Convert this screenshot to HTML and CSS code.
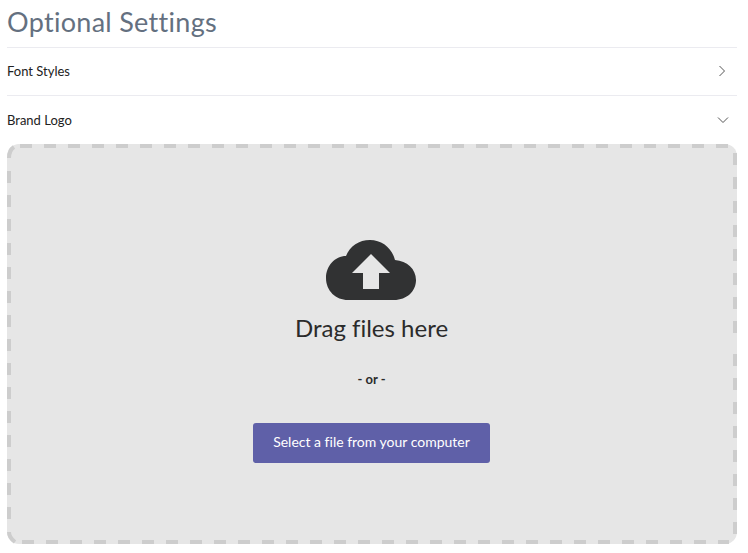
FILE: index.html
```html
<!DOCTYPE html>
<html lang="en">
<head>
<meta charset="utf-8">
<title>Optional Settings</title>
<link rel="stylesheet" href="styles.css">
</head>
<body>
<main class="page">
  <h1 class="title">Optional Settings</h1>
  <div class="row">
    <span>Font Styles</span>
    <svg class="chev" width="12" height="12" viewBox="0 0 12 12"><path d="M2.5 1l5 5-5 5" fill="none" stroke="#555" stroke-width="1"/></svg>
  </div>
  <div class="row row-open">
    <span>Brand Logo</span>
    <svg class="chev" width="12" height="12" viewBox="0 0 12 12"><path d="M1 3.5l5 5 5-5" fill="none" stroke="#555" stroke-width="1"/></svg>
  </div>
  <section class="drop">
    <svg class="dash" width="730" height="400" viewBox="0 0 730 400">
      <g fill="none" stroke="#cdcdcd" stroke-width="4">
        <path d="M13 2H721" stroke-dasharray="12 12"/>
        <path d="M15 398H722" stroke-dasharray="12 12"/>
        <path d="M2 27V375" stroke-dasharray="12 12"/>
        <path d="M728 9V189" stroke-dasharray="12 12"/>
        <path d="M728 210V390" stroke-dasharray="12 12"/>
        <path d="M2 14C2 9 4 5 7 3"/>
        <path d="M2 388C2 392 4 395 8 398"/>
      </g>
    </svg>
    <svg class="cloud" width="90" height="60" viewBox="0 0 90 60">
      <path fill="#313233" d="M22 60C10 60 0 51 0 38 0 26 9 16 20 16 24 6 33 0 44 0 56 0 66 8 69 20 81 21 90 29 90 40 90 51 81 60 68 60Z"/>
      <path fill="#e6e6e6" d="M45 14L64 33H53V49H37V33H26Z"/>
    </svg>
    <p class="drag">Drag files here</p>
    <p class="or">- or -</p>
    <button class="btn" type="button">Select a file from your computer</button>
  </section>
</main>
</body>
</html>
```
FILE: styles.css
```css
* { box-sizing: border-box; }
html, body { margin: 0; background: #fff; }
body { font-family: Lato, "Open Sans", sans-serif; color: #222; font-variant-ligatures: none; }
.page { width: 748px; height: 553px; padding: 0 11px 0 7px; overflow: hidden; }
.title { margin: 0; height: 47px; font-size: 27px; line-height: 43px; letter-spacing: .3px; font-weight: 400; color: #647080; }
.row { height: 48px; border-top: 1px solid #ebebf0; display: flex; align-items: center; justify-content: space-between; padding: 0 8px 1px 0; font-size: 13px; }
.row-open { height: 49px; padding-bottom: 0; }
.chev { display: block; }
.drop { position: relative; height: 400px; background: #e6e6e6; border-radius: 12px; display: flex; flex-direction: column; align-items: center; padding: 96px 1px 0 0; }
.dash { position: absolute; left: 0; top: 0; }
.cloud { display: block; margin-right: 1px; }
.drag { margin: 14px 0 0; font-size: 24px; line-height: 28px; color: #2b2b2b; }
.or { margin: 29px 0 0; font-size: 13px; line-height: 16px; font-weight: 700; color: #2b2b2b; }
.btn { margin-top: 36px; width: 237px; height: 40px; border: 0; border-radius: 3px; padding: 0 0 3px; background: #5f60a8; color: #fff; font: 400 14px Lato, sans-serif; font-variant-ligatures: none; }
```
